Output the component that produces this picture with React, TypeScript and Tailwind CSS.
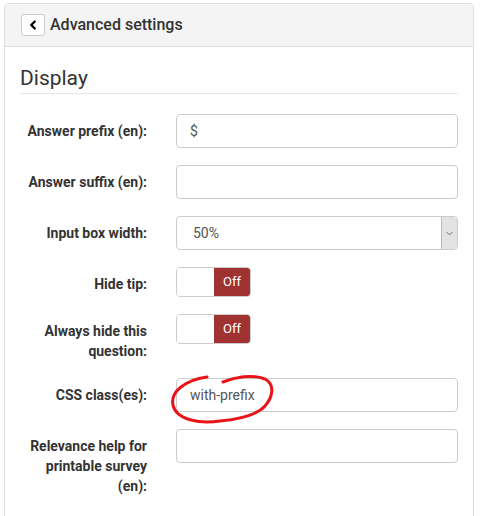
import { ChevronLeft, ChevronDown } from "lucide-react";

const font = { fontFamily: "Roboto, 'Noto Sans', sans-serif" };

function Row({ label, children }: { label: React.ReactNode; children: React.ReactNode }) {
  return (
    <div className="flex mb-[17px]">
      <label className="w-[127px] shrink-0 pt-[7px] text-right text-[14px] leading-[20px] font-bold text-[#333]">
        {label}
      </label>
      <div className="ml-[29px] flex-1">{children}</div>
    </div>
  );
}

function TextInput({ value }: { value?: string }) {
  return (
    <div className="h-[34px] w-full rounded-[4px] border border-[#ccc] bg-white px-[13px] text-[14px] leading-[32px] text-[#555]">
      {value}
    </div>
  );
}

function Toggle() {
  return (
    <div className="flex h-[30px] w-[75px] overflow-hidden rounded-[4px] border border-[#ccc]">
      <div className="w-[37px] bg-white" />
      <div className="flex flex-1 items-center justify-center bg-[#a03232] text-[13px] text-white">Off</div>
    </div>
  );
}

export default function App() {
  return (
    <div className="min-h-[516px] bg-white pt-[3px]" style={font}>
      <div className="relative ml-[4px] w-[470px] min-h-[520px] rounded-t-[4px] border border-[#ddd]">
        <div className="flex h-[43px] items-center border-b border-[#ddd] bg-[#f4f4f4] pl-[16px]">
          <button className="flex h-[22px] w-[24px] items-center justify-center rounded-[3px] border border-[#ccc] bg-white">
            <ChevronLeft size={14} strokeWidth={4} className="text-black" />
          </button>
          <span className="ml-[5px] text-[16px] font-medium text-[#333]">Advanced settings</span>
        </div>

        <div className="px-[15px] pt-[20px]">
          <h3 className="border-b border-[#e5e5e5] pb-[3px] text-[21px] leading-[23px] text-[#333]">Display</h3>

          <div className="mt-[20px]">
            <Row label="Answer prefix (en):">
              <TextInput value="$" />
            </Row>
            <Row label="Answer suffix (en):">
              <TextInput />
            </Row>
            <Row label="Input box width:">
              <div className="flex h-[34px] w-full overflow-hidden rounded-[4px] border border-[#ccc] bg-white text-[14px] text-[#555]">
                <div className="flex-1 pl-[16px] leading-[32px]">50%</div>
                <div className="flex w-[16px] items-center justify-center border-l border-[#bbb] bg-[#e3e3e3]">
                  <ChevronDown size={11} strokeWidth={1.5} className="text-[#444]" />
                </div>
              </div>
            </Row>
            <Row label="Hide tip:">
              <Toggle />
            </Row>
            <Row label={<>Always hide this<br />question:</>}>
              <Toggle />
            </Row>
            <Row label="CSS class(es):">
              <TextInput value="with-prefix" />
            </Row>
            <Row label={<>Relevance help for<br />printable survey<br />(en):</>}>
              <TextInput />
            </Row>
          </div>
        </div>

        {/* hand-drawn marker around the css class value */}
        <svg className="pointer-events-none absolute left-[-5px] top-[-4px]" width="484" height="516">
          <path
            d="M207 377 C 185 380, 170 392, 173 405 C 176 420, 200 424, 220 421 C 240 419, 258 414, 265 406 C 272 398, 276 385, 265 379 C 252 374, 235 377, 223 382"
            fill="none"
            stroke="#e8141a"
            strokeWidth="3"
            strokeLinecap="round"
          />
        </svg>
      </div>
    </div>
  );
}
